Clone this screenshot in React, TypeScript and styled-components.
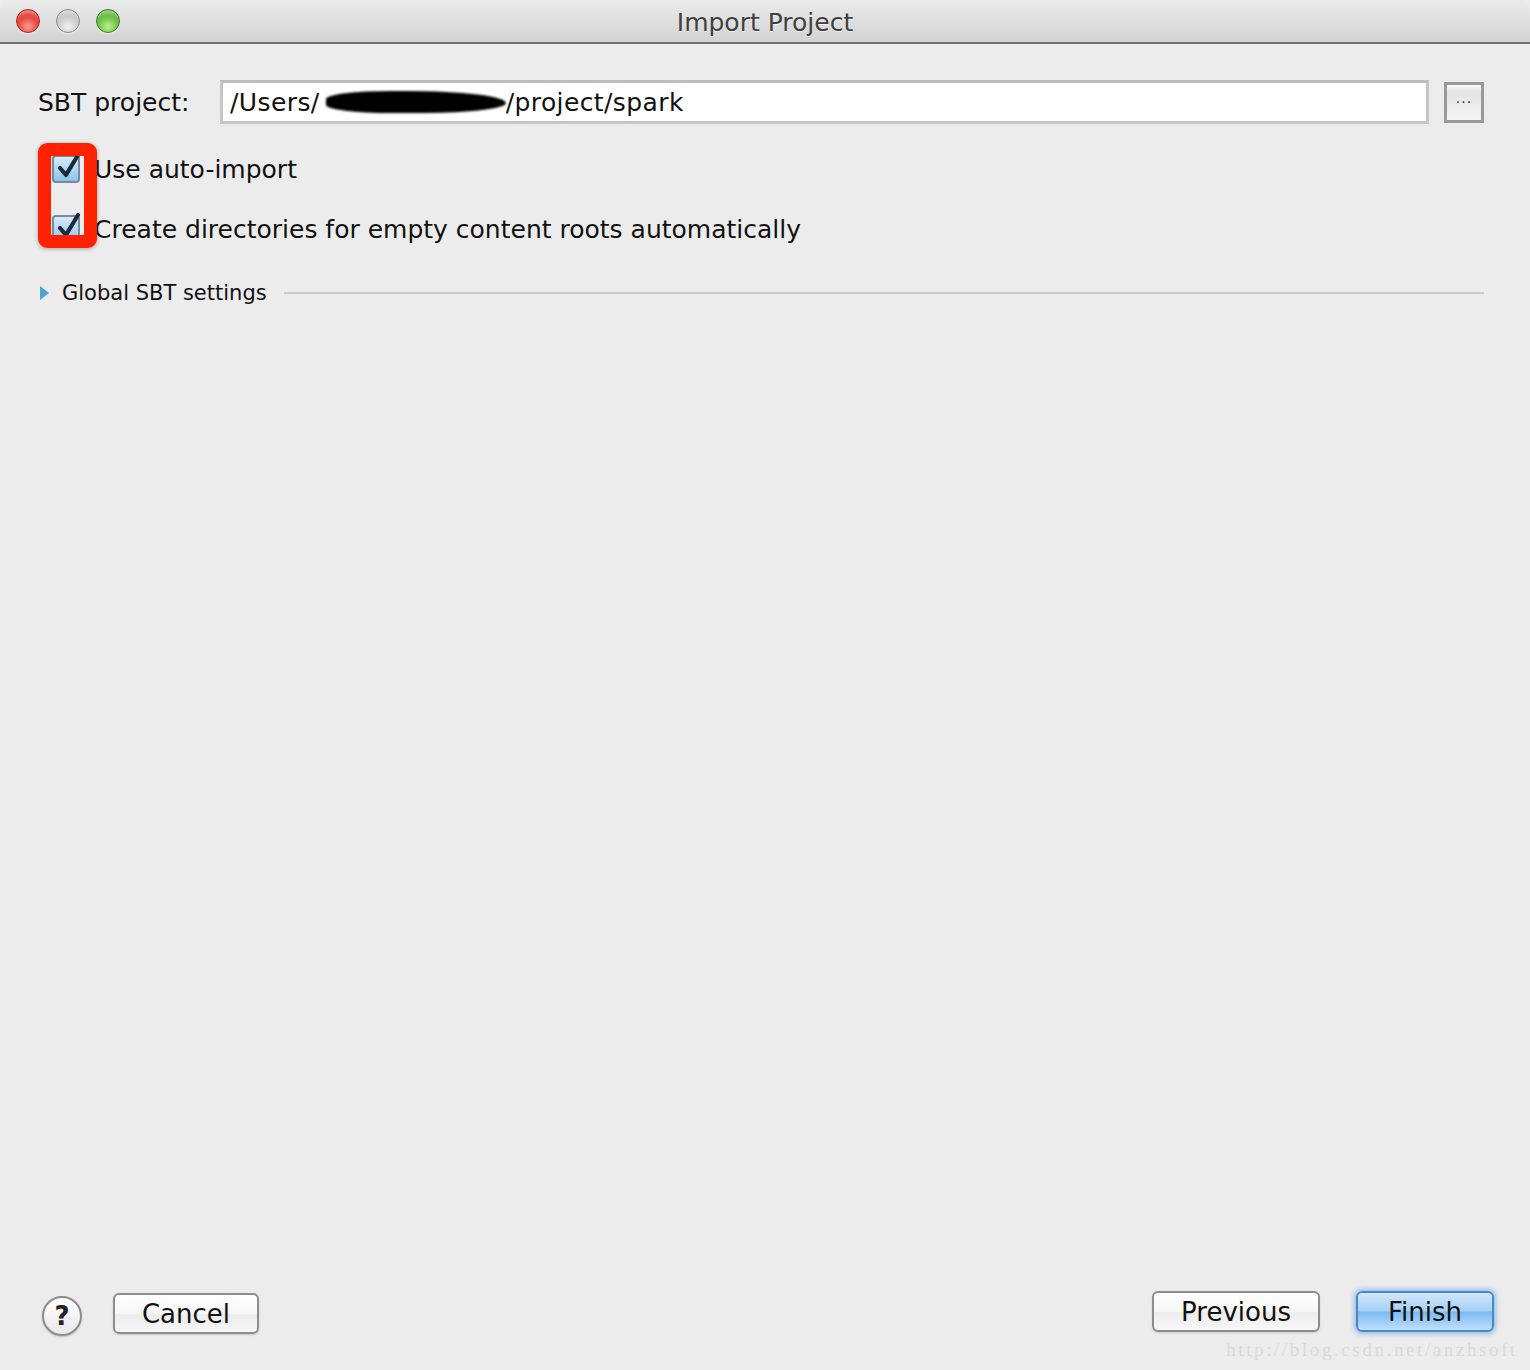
import React from "react";
import styled, { createGlobalStyle } from "styled-components";

const Global = createGlobalStyle`
  html, body { margin: 0; padding: 0; }
  body { background: #ececec; font-family: "DejaVu Sans", "Liberation Sans", sans-serif; }
`;

const Window = styled.div`
  width: 1530px;
  height: 1370px;
  display: flex;
  flex-direction: column;
  background: #ececec;
  position: relative;
  overflow: hidden;
`;

const TitleBar = styled.div`
  height: 42px;
  flex: none;
  display: flex;
  align-items: center;
  position: relative;
  background: linear-gradient(#ebebeb, #d2d2d2);
  border-bottom: 2px solid #6e6e6e;
  border-radius: 10px 10px 0 0;
`;

const Lights = styled.div`
  display: flex;
  gap: 16px;
  padding-left: 16px;
  z-index: 1;
`;

const Light = styled.div<{ $c1: string; $c2: string; $b: string }>`
  width: 24px;
  height: 24px;
  border-radius: 50%;
  box-sizing: border-box;
  border: 1px solid ${(p) => p.$b};
  background: radial-gradient(circle at 50% 75%, ${(p) => p.$c1} 0%, ${(p) => p.$c2} 70%);
  box-shadow: inset 0 6px 4px -3px rgba(255,255,255,0.55), 0 1px 1px rgba(255,255,255,0.6);
`;

const Title = styled.div`
  position: absolute;
  left: 0;
  right: 0;
  top: 8px;
  text-align: center;
  font-size: 25px;
  color: #404040;
  text-shadow: 0 1px 0 rgba(255,255,255,0.6);
`;

const Body = styled.div`
  flex: 1;
  display: flex;
  flex-direction: column;
  padding: 36px 46px 0 38px;
`;

const PathRow = styled.div`
  display: flex;
  align-items: center;
  height: 44px;
`;

const Label = styled.div`
  width: 182px;
  font-size: 25px;
  color: #111;
`;

const Field = styled.div`
  flex: 1;
  height: 44px;
  box-sizing: border-box;
  border: 3px solid #c6c6c6;
  border-top-color: #bdbdbd;
  background: #fff;
  display: flex;
  align-items: center;
  padding-left: 7px;
  font-size: 25px;
  letter-spacing: 0.4px;
  color: #111;
  white-space: pre;
`;

const Redact = styled.span`
  display: inline-block;
  width: 180px;
  height: 22px;
  margin: 0 0 0 6px;
  background: #000;
  border-radius: 40% 60% 50% 40%;
  filter: blur(1.2px);
  vertical-align: middle;
`;

const BrowseButton = styled.div`
  width: 40px;
  height: 41px;
  margin-left: 15px;
  box-sizing: border-box;
  border: 3px solid #999;
  background: linear-gradient(#fafafa 0%, #e4e4e4 20%, #f4f4f4 100%);
  display: flex;
  align-items: center;
  justify-content: center;
  font-size: 14px;
  color: #333;
  letter-spacing: 1px;
`;

const Checks = styled.div`
  position: relative;
  display: flex;
  flex-direction: column;
  gap: 32px;
  margin-top: 31px;
  padding-left: 14px;
`;

const CheckRow = styled.div`
  display: flex;
  align-items: center;
  gap: 14px;
  height: 28px;
  font-size: 25px;
  color: #111;
`;

const Box = styled.div`
  width: 28px;
  height: 28px;
  box-sizing: border-box;
  border: 2px solid #7a8a9a;
  border-radius: 4px;
  background: linear-gradient(#d6ecfb, #8cc4ee);
  position: relative;
  svg { position: absolute; left: 0; top: -6px; }
`;

const Highlight = styled.div`
  position: absolute;
  left: 0;
  top: -12px;
  width: 59px;
  height: 105px;
  box-sizing: border-box;
  border: 13px solid #ff2200;
  border-radius: 9px;
  box-shadow: 0 1px 4px rgba(0,0,0,0.3);
  pointer-events: none;
`;

const Section = styled.div`
  display: flex;
  align-items: center;
  margin-top: 38px;
  font-size: 21px;
  color: #111;
`;

const Arrow = styled.div`
  width: 0;
  height: 0;
  border-top: 7px solid transparent;
  border-bottom: 7px solid transparent;
  border-left: 9px solid #4ea3d2;
  margin: 0 13px 0 2px;
`;

const Rule = styled.div`
  flex: 1;
  height: 2px;
  background: #cbcbcb;
  margin-left: 17px;
`;

const Spacer = styled.div`
  flex: 1;
`;

const Footer = styled.div`
  display: flex;
  align-items: center;
  padding: 0 36px 34px 42px;
`;

const RightGroup = styled.div`
  display: flex;
  align-items: center;
  gap: 36px;
  padding-bottom: 4px;
`;

const Help = styled.div`
  width: 40px;
  height: 40px;
  box-sizing: border-box;
  border-radius: 50%;
  border: 2px solid #8c8c8c;
  background: linear-gradient(#ffffff, #e8e8e8);
  display: flex;
  align-items: center;
  justify-content: center;
  font-size: 26px;
  font-weight: bold;
  color: #222;
  box-shadow: 0 1px 2px rgba(0,0,0,0.2);
  margin-top: 4px;
`;

const Button = styled.div<{ $w: number; $primary?: boolean }>`
  width: ${(p) => p.$w}px;
  height: 41px;
  box-sizing: border-box;
  border-radius: 6px;
  border: 2px solid ${(p) => (p.$primary ? "#4a89c8" : "#8e8e8e")};
  background: ${(p) =>
    p.$primary
      ? "linear-gradient(#d2e8fc 0%, #a6d0f6 48%, #7dbaf2 52%, #bfe0fc 100%)"
      : "linear-gradient(#ffffff 0%, #f6f6f6 50%, #ececec 51%, #f7f7f7 100%)"};
  box-shadow: ${(p) =>
    p.$primary ? "0 0 5px 2px rgba(90,160,230,0.6)" : "0 1px 2px rgba(0,0,0,0.15)"};
  display: flex;
  align-items: center;
  justify-content: center;
  font-size: 26px;
  color: #111;
`;

const CancelButton = styled(Button)`
  margin-left: 31px;
`;

const Watermark = styled.div`
  position: absolute;
  right: 12px;
  bottom: 9px;
  font-family: "Liberation Serif", "DejaVu Serif", serif;
  font-size: 19px;
  color: #dadada;
  letter-spacing: 2.6px;
`;

const Check = () => (
  <svg width="30" height="30" viewBox="0 0 30 30">
    <path d="M6 17 L12 24 L24 4" fill="none" stroke="#1b2b3b" strokeWidth="4.2" strokeLinecap="round" strokeLinejoin="round" />
  </svg>
);

export default function App() {
  return (
    <>
      <Global />
      <Window>
        <TitleBar>
          <Lights>
            <Light $c1="#ff9a90" $c2="#e0231a" $b="#a5281f" />
            <Light $c1="#f2f2f2" $c2="#bcbcbc" $b="#8c8c8c" />
            <Light $c1="#b9f38e" $c2="#4aac26" $b="#3c7d25" />
          </Lights>
          <Title>Import Project</Title>
        </TitleBar>
        <Body>
          <PathRow>
            <Label>SBT project:</Label>
            <Field>
              /Users/<Redact />/project/spark
            </Field>
            <BrowseButton>···</BrowseButton>
          </PathRow>
          <Checks>
            <CheckRow>
              <Box><Check /></Box>
              Use auto-import
            </CheckRow>
            <CheckRow>
              <Box><Check /></Box>
              Create directories for empty content roots automatically
            </CheckRow>
            <Highlight />
          </Checks>
          <Section>
            <Arrow />
            Global SBT settings
            <Rule />
          </Section>
          <Spacer />
        </Body>
        <Footer>
          <Help>?</Help>
          <CancelButton $w={146}>Cancel</CancelButton>
          <Spacer />
          <RightGroup>
            <Button $w={168}>Previous</Button>
            <Button $w={138} $primary>Finish</Button>
          </RightGroup>
        </Footer>
        <Watermark>http://blog.csdn.net/anzhsoft</Watermark>
      </Window>
    </>
  );
}
